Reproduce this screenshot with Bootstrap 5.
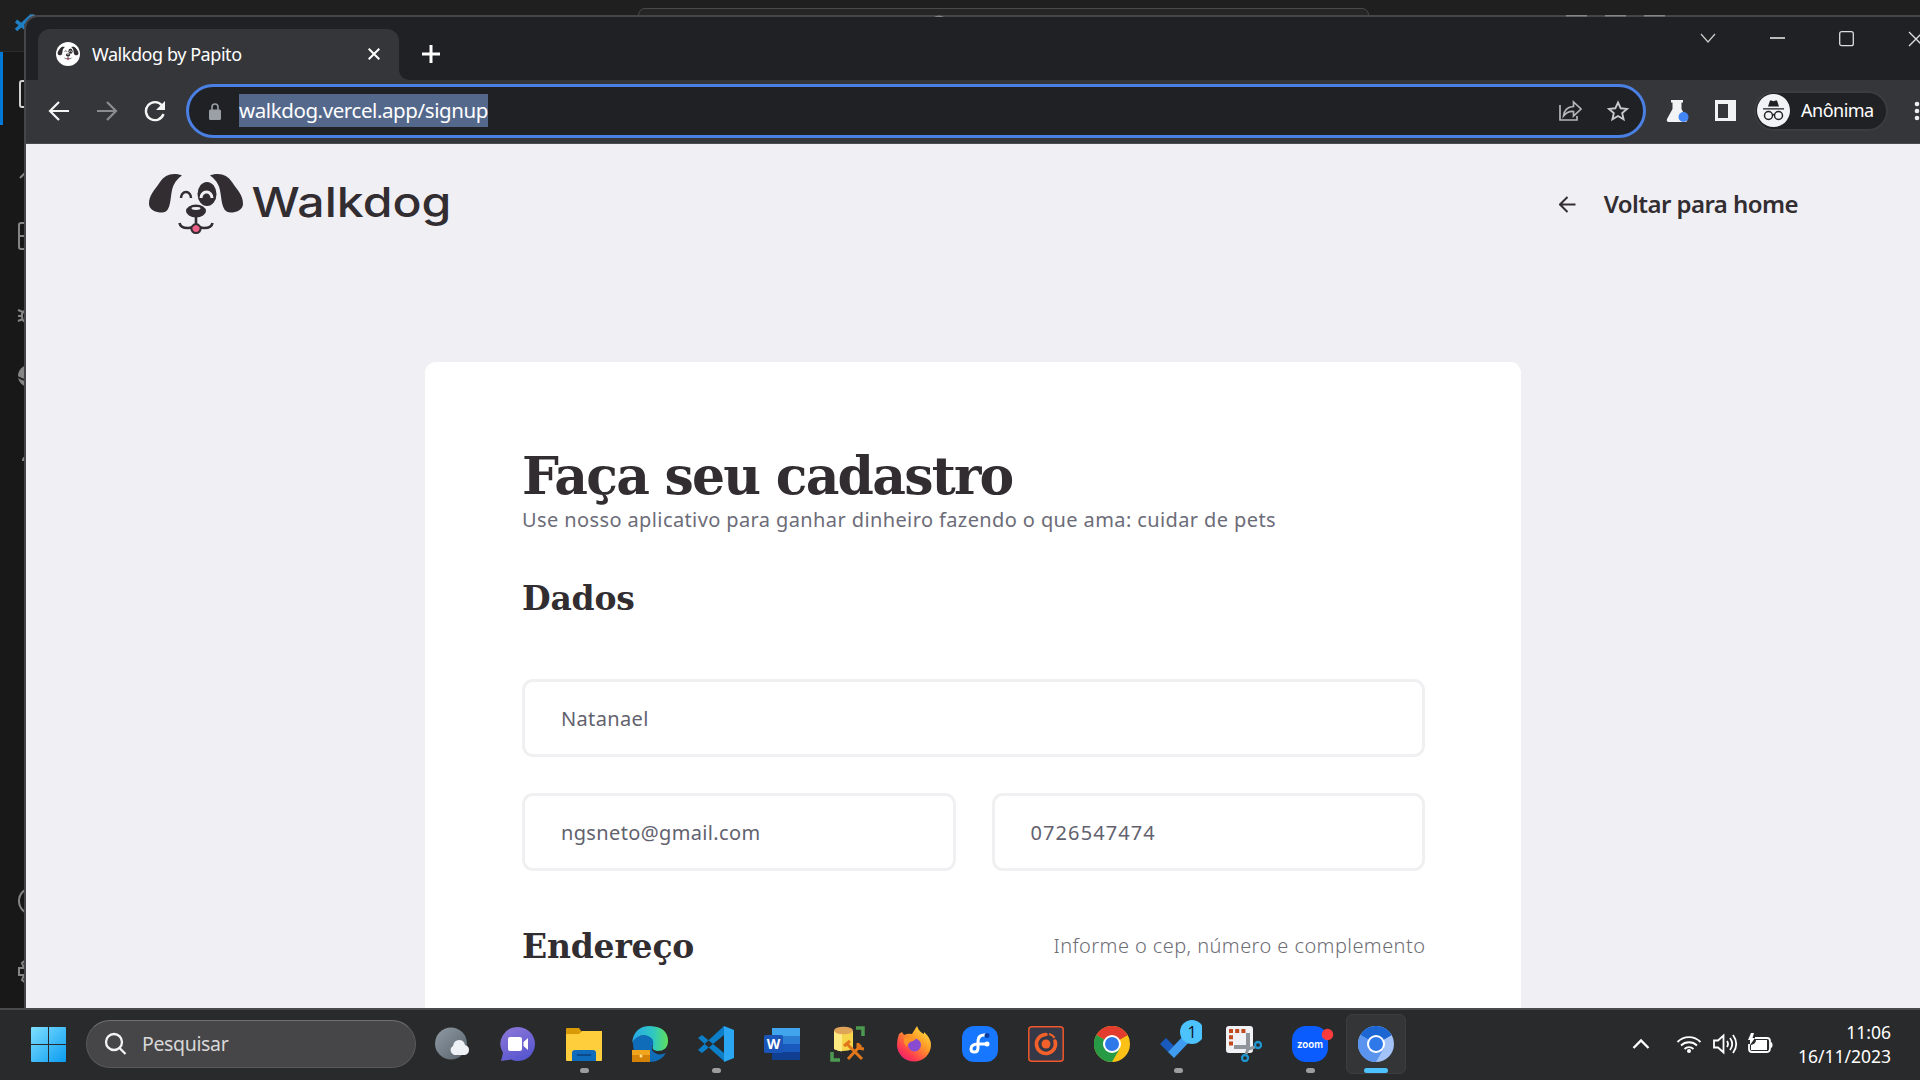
<!DOCTYPE html>
<html lang="pt-BR">
<head>
<meta charset="utf-8">
<title>Walkdog by Papito</title>
<link href="https://cdn.jsdelivr.net/npm/bootstrap@5.3.0/dist/css/bootstrap.min.css" rel="stylesheet">
<style>
html,body{width:1920px;height:1080px;overflow:hidden}
body{background:#181818;font-family:"Noto Sans","Open Sans",sans-serif}
svg{display:block;flex:none}
.desk{height:1008px}
.ed-title{height:52px;background:#1f1f1f;border-bottom:1px solid #2b2b2b}
.ed-search{width:731px;margin-left:638px;margin-top:8px;height:30px;border:1px solid #4a4a4a;border-radius:7px;background:#262626}
.ed-side{left:0;top:52px}
.ed-logo{left:14px;top:13px}
.ed-marks{left:0;top:15px}
.win{left:24px;top:15px;width:1960px;height:993px;border:2px solid #454649;border-right:0;border-bottom:0;border-top-left-radius:14px;background:#202124}
.winbody{width:1894px}
.strip{height:63px;padding-left:12px}
.tab{width:361px;height:51px;margin-top:12px;border-radius:12px 12px 0 0;background:#35363a;padding:0 19px 1px 18px;color:#fff;font-size:18px;letter-spacing:-.44px}
.ctl{gap:54px;padding-top:14px;margin-right:-4px}
.tools{height:64px;background:#35363a;border-bottom:1px solid #4b4c50;padding:0 0 2px 22px}
.omni{width:1460px;height:54px;border:3px solid #4a80e4;border-radius:27px;background:#202124;margin-left:20px;padding:0 14px 0 19px}
.urlsel{background:#54688c;color:#fff;font-size:20.5px;letter-spacing:-.41px;line-height:33px;height:33px;margin-left:17px;width:249px;white-space:nowrap}
.anon{width:134px;height:40px;border-radius:20px;background:#202124;border:2px solid #3b3c40;color:#fff;font-size:18px;letter-spacing:-.5px;padding-left:1px}
.page{height:865px;background:#f0eff4;overflow:hidden}
.phead{height:218px;padding:29px 122px 0 122px}
.back{color:#322d30;font-weight:600;font-size:24px;letter-spacing:-.56px;line-height:30px;margin-top:16px;gap:28px;height:30px}
.sheet{width:1096px;height:660px;margin-left:399px;border-radius:11px;background:#fff;padding:81px 96px 0 97px}
.slab{font-family:"DejaVu Serif",serif;font-weight:700;color:#322d30;white-space:nowrap;margin:0}
.h-main{font-size:52px;line-height:66px;letter-spacing:-1.75px}
.h-sub{font-size:33px;line-height:44px;letter-spacing:-.2px}
.lead-txt{color:#6c6c78;font-size:20px;letter-spacing:.39px;line-height:28px;white-space:nowrap}
.fld,.fld:focus{height:78px;border:3px solid #f0f0f2;border-radius:11px;padding:0 36px;color:#62626e;font-size:20px;letter-spacing:.35px;background:#fff}
.fld.num{letter-spacing:1.1px}
.hint{color:#6d6d75;font-weight:300;font-size:20px;letter-spacing:.42px;white-space:nowrap;margin-right:-.4px;padding-bottom:2px}
.bar{height:72px;background:#292a2b;border-top:2px solid #4a4a4b;color:#fff;padding:0 0 2px 31px}
.find{width:330px;height:48px;border-radius:24px;background:#464648;border:1px solid #59595a;border-top-color:#707071;margin-left:20px;padding-left:17px;color:#d8d8d8;font-size:19.5px;letter-spacing:-.35px}
.apps{margin-left:3px}
.app{width:66px;height:60px;position:relative}
.run::after{content:"";position:absolute;left:29px;top:54px;width:9px;height:5px;border-radius:3px;background:#9d9d9d}
.act::before{content:"";position:absolute;left:3px;top:0;width:60px;height:60px;border-radius:6px;background:#343536;border:1px solid #3c3d3e}
.act::after{left:21px;width:24px;background:#4cc2ff}
.act svg{position:relative}
.clock{font-size:17.5px;line-height:24px;text-align:right;width:118px}
</style>
<script src="https://cdn.jsdelivr.net/npm/bootstrap@5.3.0/dist/js/bootstrap.bundle.min.js"></script>
</head>
<body>
<div class="desk position-relative overflow-hidden">
  <div class="ed-title overflow-hidden"><div class="ed-search"></div></div>
  <svg class="ed-side position-absolute" width="26" height="956" fill="none" stroke="#858585" stroke-width="2">
    <rect width="3" height="73" fill="#0078d4" stroke="none"/>
    <path stroke="#d0d0d0" d="M27 29h-5q-2 0-2 2v22q0 2 2 2h5"/>
    <path d="M20 126l7-7M27 171h-6q-2 0-2 2v22q0 2 2 2h6M19 184h8M18 258l5 2M18 264h5M18 269l5-2M27 258q-6 2-5 6 0 6 5 6"/>
    <circle cx="29" cy="324" r="11" fill="#858585" stroke="none"/><path stroke="#222" d="M18 325q6 4 10 3"/>
    <path d="M23 409q0-4 4-4"/><circle cx="32" cy="849" r="13"/>
    <path d="M27 907l-5 4 2 5h-5v7h5l-2 5 5 4"/>
  </svg>
  <svg class="ed-logo position-absolute" width="26" height="22"><path d="M2 8l14 11M2 17L18 2" stroke="#1e7fc4" stroke-width="3.500"/><path d="M15 4l4-3 6 3-8 5z" fill="#4f7fa6"/></svg>
  <div class="win position-absolute overflow-hidden">
   <div class="winbody d-flex flex-column">
    <div class="strip d-flex align-items-start">
      <div class="tab d-flex align-items-center">
        <svg width="24" height="24"><circle cx="12" cy="12" r="12" fill="#fff"/><g transform="translate(1.4 4.5) scale(.222)"><use href="#dog"/></g></svg>
        <span style="margin-left:12px">Walkdog by Papito</span>
        <svg class="ms-auto" width="12" height="12" stroke="#fff" stroke-width="2"><path d="M.7.7l10.6 10.6M11.3.7L.7 11.3"/></svg>
      </div>
      <svg width="12" height="12" style="margin-top:51px" fill="#35363a"><path d="M0 0v12h12Q0 12 0 0"/></svg>
      <svg width="18" height="18" style="margin:28px 0 0 11px" stroke="#fff" stroke-width="3"><path d="M9 0v18M0 9h18"/></svg>
      <div class="ctl d-flex ms-auto">
        <svg width="16" height="16" fill="none" stroke="#c8c8c8" stroke-width="1.3"><path d="M1 3l7 8 7-8"/></svg>
        <svg width="15" height="16" stroke="#eee" stroke-width="1.3"><path d="M0 7h15"/></svg>
        <svg width="15" height="16" fill="none" stroke="#ddd" stroke-width="1.3"><rect x=".7" y=".7" width="13.6" height="14" rx="2"/></svg>
        <svg width="16" height="16" stroke="#ddd" stroke-width="1.3"><path d="M1 1l14 14M15 1L1 15"/></svg>
      </div>
    </div>
    <div class="tools d-flex align-items-center">
      <svg width="22" height="22" fill="none" stroke="#f5f5f5" stroke-width="2.2"><path d="M21 11H2M11 2l-9 9 9 9"/></svg>
      <svg style="margin-left:26px" width="22" height="22" fill="none" stroke="#8b8c90" stroke-width="2.2"><path d="M1 11h19M11 2l9 9-9 9"/></svg>
      <svg style="margin-left:26px" width="22" height="22" fill="none" stroke="#f5f5f5" stroke-width="2.4"><path d="M18 5.5A9 9 0 1 0 19.5 14"/><path d="M21 1v9h-9z" fill="#f5f5f5" stroke="none"/></svg>
      <div class="omni d-flex align-items-center">
        <svg width="14" height="18" style="margin-top:3px"><rect x="1" y="6.500" width="12" height="10.500" rx="1.500" fill="#9aa0a6"/><path d="M4 7V4a3 3 0 0 1 6 0v3" fill="none" stroke="#9aa0a6" stroke-width="1.600"/></svg>
        <span class="urlsel">walkdog.vercel.app/signup</span>
        <svg class="ms-auto" width="24" height="24" fill="none" stroke="#b4b5b8" stroke-width="1.700"><path d="M2 6v15h17v-4M5.500 17q1-9 10-9.500V3l7.500 7-7.500 7v-4.500q-6-.5-10 4.500z"/></svg>
        <svg style="margin-left:25px" width="22" height="22" fill="none" stroke="#c8c9cc" stroke-width="1.900"><path d="M11 2.500l2.700 5.800 6.300.6-4.800 4.200 1.400 6.200L11 16l-5.600 3.300 1.400-6.200L2 8.900l6.300-.6z"/></svg>
      </div>
      <svg style="margin-left:20px" width="24" height="22" fill="#f1f3f4"><path d="M5 0h12v2.500h-1.500V9L21 19q1 3-2 3H3q-3 0-2-3L6.500 9V2.500H5z"/><circle cx="17.500" cy="17" r="5" fill="#4285f4"/></svg>
      <svg style="margin-left:25px" width="21" height="21"><path fill="#f1f3f4" fill-rule="evenodd" d="M0 0h21v21H0zM3 4v14h10V4z"/></svg>
      <div class="anon d-flex align-items-center" style="margin-left:18px">
        <svg width="33" height="33"><circle cx="16.500" cy="16.500" r="16.500" fill="#f1f3f4"/><path d="M11 12.500l2-6h1.500l2 .7 2-.7H20l2 6zM6 14.200h21v1.400H6z" fill="#202124"/><g fill="none" stroke="#202124" stroke-width="1.500"><circle cx="11.500" cy="21.500" r="4"/><circle cx="21.500" cy="21.500" r="4"/><path d="M15.500 21q1-1 2 0"/></g></svg>
        <span style="margin-left:11px">Anônima</span>
      </div>
      <svg class="ms-auto" width="8" height="22" fill="#eee"><circle cx="5" cy="4" r="2.300"/><circle cx="5" cy="11" r="2.300"/><circle cx="5" cy="18" r="2.300"/></svg>
    </div>
    <main class="page">
      <header class="phead d-flex justify-content-between align-items-start">
        <svg width="306" height="66" fill="#322d30">
          <g id="dog" fill="#322d30">
            <path d="M34 2.500C24-1 17 2 12 9 6 18 1 22 1 31c0 6 7 8.500 13 8.500 11 0 7-19 12-28 2-4 4-6 8-9z"/>
            <path d="M62 2.500C72-1 79 2 84 9c6 9 11 13 11 22 0 6-7 8.500-12 8.500-12 0-8-19-13-28-2-4-4-6-8-9z"/>
            <ellipse cx="59" cy="21" rx="9.500" ry="12"/>
            <path d="M53 25a5.500 6 0 0 1 11 0" fill="none" stroke="#f0eff4" stroke-width="3"/>
            <path d="M33 25a5 6 0 0 1 10 0" fill="none" stroke="#322d30" stroke-width="2.500"/>
            <ellipse cx="48" cy="38" rx="10" ry="6.500"/><ellipse cx="48" cy="35.500" rx="4.500" ry="1.400" fill="#f0eff4"/>
            <path d="M48 43v8M31.500 50q1 5 8 5 7 0 8.500-4 1.500 4 8.500 4 7 0 8-5" fill="none" stroke="#322d30" stroke-width="2.600"/>
            <path d="M43.500 54q4.500-6 9 0c1.500 8-10.500 8-9 0z" fill="#ee5f86" stroke="#322d30" stroke-width="2"/>
          </g>
          <text x="103.500" y="44" font-family="Inter,sans-serif" font-size="41" font-weight="500" textLength="200" lengthAdjust="spacingAndGlyphs">Walkdog</text>
        </svg>
        <a class="back d-flex align-items-center text-decoration-none"><svg width="17" height="17" fill="none" stroke="#322d30" stroke-width="2"><path d="M16.500 8.500H1.500M8.500 1L1 8.500 8.500 16"/></svg><span>Voltar para home</span></a>
      </header>
      <form class="sheet">
        <h1 class="slab h-main">Faça seu cadastro</h1>
        <div class="lead-txt" style="margin-top:-3px">Use nosso aplicativo para ganhar dinheiro fazendo o que ama: cuidar de pets</div>
        <h2 class="slab h-sub" style="margin-top:43px">Dados</h2>
        <input class="fld form-control shadow-none" style="margin-top:58px" value="Natanael">
        <div class="d-flex" style="gap:36px;margin-top:36px">
          <input class="fld form-control shadow-none" value="ngsneto@gmail.com">
          <input class="fld num form-control shadow-none" value="0726547474">
        </div>
        <div class="d-flex justify-content-between align-items-center" style="margin-top:54px">
          <h2 class="slab h-sub">Endereço</h2>
          <span class="hint">Informe o cep, número e complemento</span>
        </div>
      </form>
    </main>
   </div>
  </div>
  <svg class="ed-marks position-absolute" width="1920" height="2" fill="#858585"><path d="M1566 0h21v1.500h-21zM1605 0h21v1.500h-21zM1644 0h21v1.500h-21zM934 2q5-3 10 0z"/></svg>
</div>
<footer class="bar d-flex align-items-center">
  <svg width="35" height="35"><defs><linearGradient id="wg" x2="1" y2="1" gradientUnits="objectBoundingBox"><stop stop-color="#7fe0ff"/><stop offset="1" stop-color="#0a9bf0"/></linearGradient></defs><path fill="url(#wg)" d="M1 0h16v17H0V1q0-1 1-1M18 0h16q1 0 1 1v16H18zM0 18h17v17H1q-1 0-1-1zM18 18h17v16q0 1-1 1H18z"/></svg>
  <div class="find d-flex align-items-center">
    <svg width="24" height="24" fill="none" stroke="#f4f4f4" stroke-width="2.300"><circle cx="10" cy="10" r="8"/><path d="M15.500 16l6 6"/></svg>
    <span style="margin-left:14px">Pesquisar</span>
  </div>
  <div class="apps d-flex align-items-start">
    <div class="app d-flex align-items-center justify-content-center"><svg width="36" height="36"><defs><linearGradient id="mg" x2="1" y2="1"><stop stop-color="#8f9aa4"/><stop offset="1" stop-color="#59636c"/></linearGradient></defs><circle cx="17" cy="17.500" r="16" fill="url(#mg)"/><path d="M20 29a5 5 0 0 1-1-9q1-6 6-6 5 0 6 5 4 1 4 5t-4 5z" fill="#eef1f6"/></svg></div>
    <div class="app d-flex align-items-center justify-content-center"><svg width="36" height="36"><defs><linearGradient id="cg" x2=".5" y2="1"><stop stop-color="#8f78d8"/><stop offset="1" stop-color="#5a58d0"/></linearGradient></defs><path fill="url(#cg)" d="M18 1a17 17 0 1 1-7 32.500L1 35l2-8A17 17 0 0 1 18 1z"/><rect x="8" y="11" width="14" height="14" rx="2" fill="#fff"/><path d="M23.500 16l4.500-4v12l-4.500-4z" fill="#fff"/></svg></div>
    <div class="app run d-flex align-items-center justify-content-center"><svg width="36" height="36"><path d="M0 3q0-1 1-1h12l3 4v6H0z" fill="#d99a08"/><path d="M0 8h13l3-3h20v29q0 1-1 1H1q-1 0-1-1z" fill="#ffce3d"/><path d="M6 35V27q0-3 3-3h18q3 0 3 3v8z" fill="#0f6cbd"/><path d="M11 29h14" stroke="#0a4a88" stroke-width="2"/></svg></div>
    <div class="app d-flex align-items-center justify-content-center"><svg width="36" height="36"><defs><linearGradient id="eg"><stop stop-color="#28a8e8"/><stop offset=".6" stop-color="#2fc8c0"/><stop offset="1" stop-color="#5fe05a"/></linearGradient></defs><path d="M1 15Q4 9 13 9q10 0 10 8-4 3-3 7 5 7 14 3-5 9-17 9Q0 34 1 15z" fill="#0f6cb8"/><path d="M0 17Q2 0 18 0q18 1 18 15 0 10-11 10-6-1-4-5 2-9-8-11Q4 9 0 17z" fill="url(#eg)"/><path d="M0 24h18v12H0z" fill="#d58209"/><path d="M0 24h18v5H0z" fill="#f0a51c"/><circle cx="9" cy="30" r="1.500" fill="#ffe390"/></svg></div>
    <div class="app run d-flex align-items-center justify-content-center"><svg width="36" height="36"><path d="M0 12l4-3 22 18v8zM0 24l4 3L26 9V0z" fill="#0d7fc8"/><path d="M26 0l10 4v28l-10 4z" fill="#2aa6f2"/></svg></div>
    <div class="app d-flex align-items-center justify-content-center"><svg width="36" height="36"><path d="M8 2h28v8H8z" fill="#41a5ee"/><path d="M8 10h28v8H8z" fill="#2b7cd3"/><path d="M8 18h28v8H8z" fill="#185abd"/><path d="M8 26h28v8H8z" fill="#103f91"/><rect y="9" width="19" height="18" rx="1.500" fill="#1b55b8"/><text x="9.500" y="23" text-anchor="middle" font-family="Open Sans,sans-serif" font-size="14" font-weight="700" fill="#fff">W</text></svg></div>
    <div class="app d-flex align-items-center justify-content-center"><svg width="36" height="36"><path d="M4 5v18q9 4 19 0V5z" fill="#f7d54a"/><path d="M4 5v18q4 2 8 2.500V5z" fill="#ffe982"/><ellipse cx="13.500" cy="4.500" rx="9.500" ry="3.800" fill="#e0a458"/><path d="M26 2h7v8M2 26v8h8" fill="none" stroke="#4c9a50" stroke-width="3.500"/><path d="M18 33l13-14M32 33L17 18M14 20l6-5M28 17v5l6 1" fill="none" stroke="#e2761b" stroke-width="3"/></svg></div>
    <div class="app d-flex align-items-center justify-content-center"><svg width="36" height="36"><defs><linearGradient id="fg" x1="1" x2=".2" y2="1"><stop stop-color="#fff04a"/><stop offset=".45" stop-color="#ff9a26"/><stop offset=".8" stop-color="#ff3b50"/><stop offset="1" stop-color="#e81f75"/></linearGradient></defs><path fill="url(#fg)" d="M3 8l3-2 2 3q4-2 8-1l5-8q2 6 7 8v-2q7 6 7 13a17 16.500 0 0 1-34 0Q1 13 3 8z"/><circle cx="18.500" cy="19" r="6.500" fill="#8a4bd0"/><path d="M8 12q6-3 12 1-2 2-6 3-3 2-3 5-4-4-3-9z" fill="#ff9426"/></svg></div>
    <div class="app d-flex align-items-center justify-content-center"><svg width="36" height="36"><rect width="36" height="36" rx="12" fill="#1877ff"/><path d="M24 9q-8-1-8 7v6q0 4-3.500 4T9 23q0-5 7-5h8" fill="none" stroke="#fff" stroke-width="3" stroke-linecap="round"/><circle cx="25" cy="18" r="2.500" fill="#fff"/><circle cx="25" cy="9.500" r="2.500" fill="#0a3da0"/></svg></div>
    <div class="app d-flex align-items-center justify-content-center"><svg width="36" height="36"><rect x=".8" y=".8" width="34.400" height="34.400" rx="3" fill="#353846" stroke="#f0572a" stroke-width="1.500"/><path d="M18 8.500A9.500 9.500 0 1 0 27 15" fill="none" stroke="#f4602a" stroke-width="3.600" stroke-linecap="round"/><path d="M21 8q4 1 5.500 4" stroke="#f4602a" stroke-width="2" fill="none"/><circle cx="18" cy="18" r="4.500" fill="#f4602a"/></svg></div>
    <div class="app d-flex align-items-center justify-content-center"><svg width="36" height="36"><circle cx="18" cy="18" r="18" fill="#fbc116"/><path d="M18 18L2.400 9A18 18 0 0 1 33.600 9z" fill="#e33b2e"/><path d="M2.400 9A18 18 0 0 0 18 36l7.800-13.500L18 18z" fill="#269a45"/><path d="M18 9h15.600L18 18z" fill="#e33b2e"/><circle cx="18" cy="18" r="9" fill="#fff"/><circle cx="18" cy="18" r="7" fill="#2f78ea"/></svg></div>
    <div class="app run d-flex align-items-center justify-content-center"><svg width="48" height="48"><path d="M6 24l6-6 8 8-6 6z" fill="#185abd"/><path d="M14 32L32 13l6 6-18 19z" fill="#3f9cf0"/><circle cx="38" cy="11" r="12" fill="#4cc2ff" transform="translate(0 1)"/><text x="38" y="18" text-anchor="middle" font-family="Open Sans,sans-serif" font-size="16" fill="#111">1</text></svg></div>
    <div class="app d-flex align-items-center justify-content-center"><svg width="36" height="36"><rect width="27" height="27" rx="3" fill="#f1f2f5"/><path d="M3 5h17M5 3v17" stroke="#c14a1e" stroke-width="4" stroke-dasharray="4 2.200"/><path d="M22 7v17M8 21h14" stroke="#8f959b" stroke-width="4"/><path d="M20 28l2-5 7-2" stroke="#8f959b" stroke-width="3" fill="none"/><circle cx="19" cy="32" r="3" fill="none" stroke="#1f95d0" stroke-width="2.300"/><circle cx="32" cy="19" r="3" fill="none" stroke="#1f95d0" stroke-width="2.300"/></svg></div>
    <div class="app run d-flex align-items-center justify-content-center"><svg width="36" height="36" overflow="visible"><rect width="36" height="36" rx="14" fill="#0b5cff"/><text x="18" y="21.500" text-anchor="middle" font-family="Inter,sans-serif" font-size="11" font-weight="600" textLength="26" lengthAdjust="spacingAndGlyphs" fill="#fff">zoom</text><circle cx="35.500" cy="8.500" r="5.700" fill="#ff3b3b"/></svg></div>
    <div class="app run act d-flex align-items-center justify-content-center"><svg width="36" height="36"><circle cx="18" cy="18" r="18" fill="#a3c2f8"/><path d="M18 18L2.400 9A18 18 0 0 1 33.600 9z" fill="#1b66d2"/><path d="M2.400 9A18 18 0 0 0 18 36l7.800-13.500L18 18z" fill="#5a94ee"/><path d="M18 9h15.600L18 18z" fill="#1b66d2"/><circle cx="18" cy="18" r="9" fill="#fff"/><circle cx="18" cy="18" r="7" fill="#2f78ea"/></svg></div>
  </div>
  <div class="d-flex align-items-center" style="margin-left:223px">
    <svg width="18" height="12" fill="none" stroke="#fff" stroke-width="2.300"><path d="M1.500 10L9 2.500l7.500 7.500"/></svg>
    <svg style="margin-left:26px" width="26" height="20" fill="none" stroke="#fff" stroke-width="1.800"><path d="M1.500 8a16 16 0 0 1 23 0M5 11.500a11.500 11.500 0 0 1 16 0M8.500 15a6.500 6.500 0 0 1 9 0"/><circle cx="13" cy="17" r="2" fill="#fff" stroke="none"/></svg>
    <svg style="margin-left:10px" width="26" height="22" fill="none" stroke="#fff" stroke-width="1.800"><path d="M2 7.500h4l5.500-5v17l-5.500-5H2zM15 8q2 3 0 6M18 5q4.500 6 0 12M21 2q6.500 9 0 18"/></svg>
    <svg style="margin-left:9px" width="26" height="22"><path d="M8 5h12q3 0 3 3v7q0 4-3 4H5q-3 0-3-3v-5" fill="none" stroke="#fff" stroke-width="1.800"/><path d="M9 7h11v10H4v-5q5-1 5-5z" fill="#fff"/><path d="M23.500 9q2 0 2 3t-2 3zM4 0l-3 7h2v5l5-7H5.500L7 0z" fill="#fff"/></svg>
    <div class="clock">11:06<br>16/11/2023</div>
  </div>
</footer>
</body>
</html>
